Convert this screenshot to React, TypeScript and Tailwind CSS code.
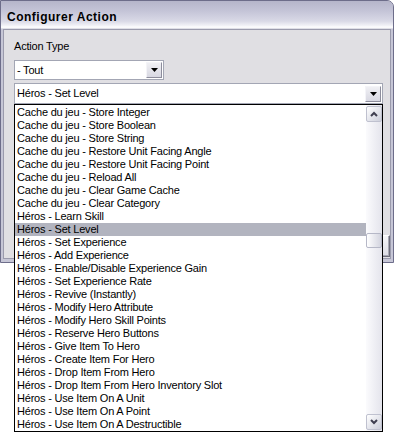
import React from "react";

const items = [
  "Cache du jeu - Store Integer",
  "Cache du jeu - Store Boolean",
  "Cache du jeu - Store String",
  "Cache du jeu - Restore Unit Facing Angle",
  "Cache du jeu - Restore Unit Facing Point",
  "Cache du jeu - Reload All",
  "Cache du jeu - Clear Game Cache",
  "Cache du jeu - Clear Category",
  "Héros - Learn Skill",
  "Héros - Set Level",
  "Héros - Set Experience",
  "Héros - Add Experience",
  "Héros - Enable/Disable Experience Gain",
  "Héros - Set Experience Rate",
  "Héros - Revive (Instantly)",
  "Héros - Modify Hero Attribute",
  "Héros - Modify Hero Skill Points",
  "Héros - Reserve Hero Buttons",
  "Héros - Give Item To Hero",
  "Héros - Create Item For Hero",
  "Héros - Drop Item From Hero",
  "Héros - Drop Item From Hero Inventory Slot",
  "Héros - Use Item On A Unit",
  "Héros - Use Item On A Point",
  "Héros - Use Item On A Destructible",
];

function ComboArrow() {
  return (
    <div className="flex h-[16px] w-[16px] shrink-0 items-center justify-center border border-t-[#f4f4f8] border-l-[#f4f4f8] border-r-[#8d8d9c] border-b-[#8d8d9c] bg-gradient-to-b from-[#f0f0f4] to-[#d8d8e2]">
      <svg width="7" height="4" viewBox="0 0 7 4">
        <polygon points="0,0 7,0 3.5,4" fill="#000" />
      </svg>
    </div>
  );
}

function ScrollBtn({ up }: { up?: boolean }) {
  return (
    <div className="flex h-[16px] w-[16px] shrink-0 items-center justify-center rounded-[2px] border border-[#bfc1cf] bg-gradient-to-br from-[#ffffff] to-[#cdcfdb]">
      <svg width="8" height="6" viewBox="0 0 8 6">
        {up ? (
          <polyline points="1,5 4,2 7,5" fill="none" stroke="#3f3f50" strokeWidth="2" />
        ) : (
          <polyline points="1,1 4,4 7,1" fill="none" stroke="#3f3f50" strokeWidth="2" />
        )}
      </svg>
    </div>
  );
}

export default function App() {
  return (
    <div className="relative h-[432px] w-[397px] overflow-hidden bg-white font-['Liberation_Sans',Arial,sans-serif] text-[11px] tracking-[-0.2px] text-black">
      {/* Window */}
      <div className="flex h-[263px] w-[394px] flex-col overflow-hidden rounded-tr-[7px] border border-[#6d6d8a] bg-[#c6c6d6]">
        <div className="h-[28px] shrink-0 bg-[linear-gradient(to_bottom,#b5b5ca_0%,#c4c4d7_35%,#d9d9e6_72%,#f2f2f7_88%,#ffffff_94%,#d0d0dc_100%)] pl-[6px] pt-[10px] text-[12px] font-bold leading-[12px] tracking-[0.5px]">
          Configurer Action
        </div>
        <div className="flex flex-1 flex-col px-[2px] pb-[3px]">
          <div className="flex flex-1 flex-col border border-[#9a9aac] bg-[#e0dfe3] pl-[10px] pt-[10px]">
            <div className="h-[13px] leading-[13px]">Action Type</div>
            <div className="mt-[7px] flex h-[20px] w-[150px] items-center border border-[#a3a6b4] bg-white pl-[2px] pr-[1px]">
              <span className="flex-1 leading-[18px]">- Tout</span>
              <ComboArrow />
            </div>
            <div className="mt-[3px] flex h-[21px] w-[369px] items-center border border-[#a3a6b4] bg-white pl-[2px] pr-[1px]">
              <span className="flex-1 leading-[19px]">Héros - Set Level</span>
              <ComboArrow />
            </div>
            <div className="mb-[1px] mt-auto flex h-[22px] w-[75px] self-end border border-t-[#ffffff] border-l-[#ffffff] border-r-[#6e6e7c] border-b-[#6e6e7c] bg-gradient-to-b from-[#f6f6f8] to-[#dcdce4] shadow-[inset_-1px_-1px_0_#a8a8b4]" />
          </div>
        </div>
      </div>

      {/* Dropped-down list (overlay) */}
      <div className="absolute left-[14px] top-[104px] flex h-[328px] w-[369px] border border-black bg-white">
        <div className="w-[351px] pt-[1px]">
          {items.map((it, i) => (
            <div
              key={i}
              className={
                "h-[13px] overflow-hidden whitespace-nowrap pl-[2px] leading-[13px] " +
                (i === 9 ? "bg-[#b2b4bf]" : "")
              }
            >
              {it}
            </div>
          ))}
        </div>
        <div className="flex w-[16px] flex-col bg-gradient-to-r from-[#fbfbfd] to-[#e4e4ec] py-[1px]">
          <ScrollBtn up />
          <div className="flex flex-1 flex-col">
            <div className="h-[111px]" />
            <div className="h-[15px] w-[16px] rounded-[2px] border border-[#b6b8c7] bg-gradient-to-r from-[#ffffff] to-[#d3d4df]" />
          </div>
          <ScrollBtn />
        </div>
      </div>
    </div>
  );
}
